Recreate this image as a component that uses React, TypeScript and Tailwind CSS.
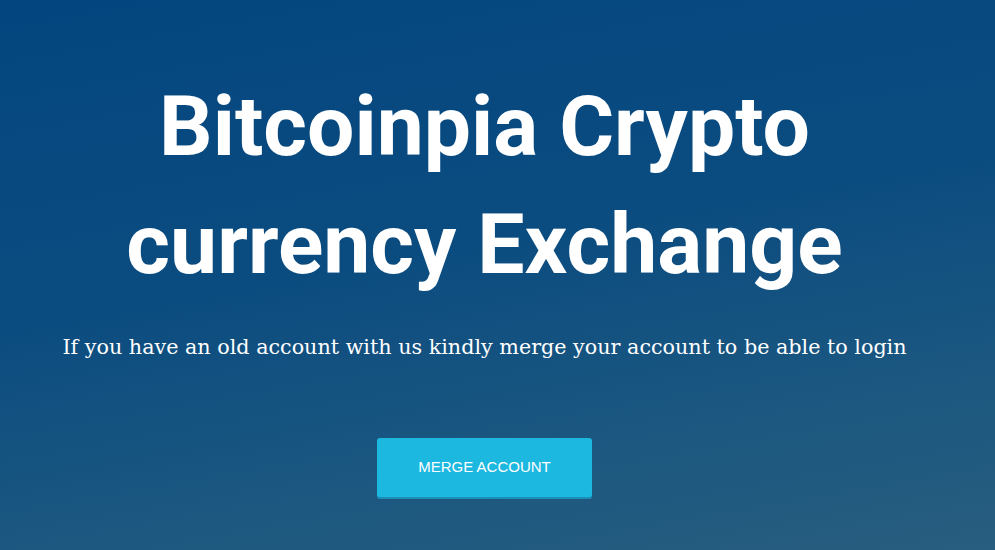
export default function App() {
  return (
    <div className="h-[550px] w-full overflow-hidden bg-[linear-gradient(170deg,#03467f_0%,#0b4c80_45%,#1b5780_75%,#285e7f_100%)]">
      <div className="flex flex-col items-center pr-[26px] pt-[68px]">
        <h1 className="text-center font-['Roboto',sans-serif] text-[84px] leading-[118px] font-bold text-white w-[760px]">
          Bitcoinpia Crypto currency Exchange
        </h1>
        <p className="mt-[29px] font-['DejaVu_Serif',serif] text-[20.7px] leading-[28px] text-white whitespace-nowrap">
          If you have an old account with us kindly merge your account to be able to login
        </p>
        <button className="mt-[77px] h-[59px] w-[215px] rounded-[3px] bg-[#1cb8e0] font-['Liberation_Sans',sans-serif] text-[15px] text-white shadow-[0_2px_0_#1a8fb8]">
          MERGE ACCOUNT
        </button>
      </div>
    </div>
  );
}
